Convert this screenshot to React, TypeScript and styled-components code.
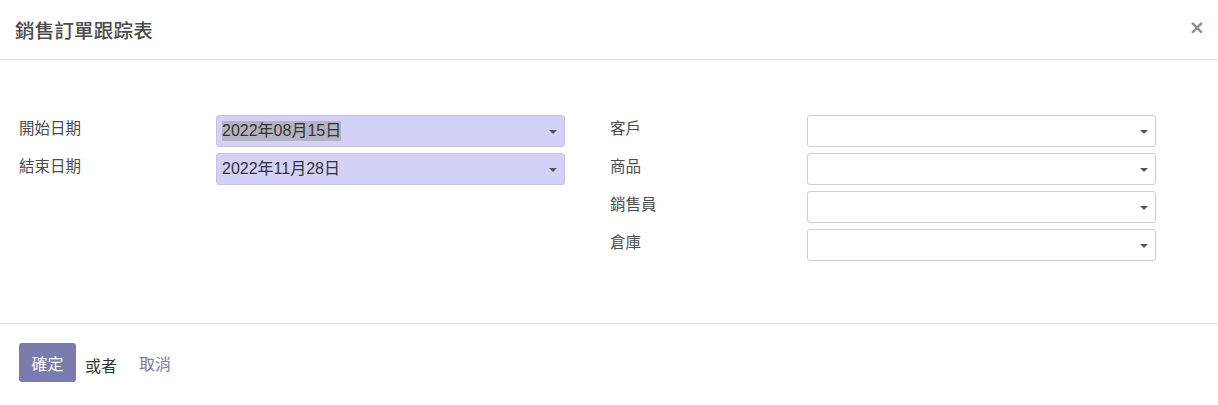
import React from 'react'
import styled, { createGlobalStyle } from 'styled-components'

const Global = createGlobalStyle`
  html, body {
    margin: 0;
    padding: 0;
    background: #fff;
  }
  body {
    font-family: "Liberation Sans", "Noto Sans CJK TC", sans-serif;
    color: #4c4c4c;
  }
`

type Field = { label: string; value?: string; selected?: boolean; date?: boolean }

const leftFields: Field[] = [
  { label: '開始日期', value: '2022年08月15日', selected: true, date: true },
  { label: '結束日期', value: '2022年11月28日', date: true },
]

const rightFields: Field[] = [
  { label: '客戶' },
  { label: '商品' },
  { label: '銷售員' },
  { label: '倉庫' },
]

const App = () => {
  return (
    <Dialog>
      <Global />
      <Header>
        <Title>銷售訂單跟踪表</Title>
        <Close>×</Close>
      </Header>
      <Body>
        <Group>
          {leftFields.map((f) => (
            <Row key={f.label}>
              <Label>{f.label}</Label>
              <Select $date={f.date}>
                <Value>{f.selected ? <Selected>{f.value}</Selected> : f.value}</Value>
                <Caret />
              </Select>
            </Row>
          ))}
        </Group>
        <Group>
          {rightFields.map((f) => (
            <Row key={f.label}>
              <Label>{f.label}</Label>
              <Select>
                <Value />
                <Caret />
              </Select>
            </Row>
          ))}
        </Group>
      </Body>
      <Footer>
        <Primary>確定</Primary>
        <Or>或者</Or>
        <Cancel>取消</Cancel>
      </Footer>
    </Dialog>
  )
}

export default App

const Dialog = styled.div`
  width: 1218px;
  height: 405px;
  background: #fff;
  display: flex;
  flex-direction: column;
`
const Header = styled.div`
  height: 59px;
  border-bottom: 1px solid #e2e2e2;
  display: flex;
  align-items: center;
  justify-content: space-between;
  padding: 0 13px 0 15px;
`
const Title = styled.div`
  font-family: "Noto Sans CJK TC", sans-serif;
  font-size: 19.5px;
  font-weight: 500;
  color: #4a4a4a;
  letter-spacing: 0.2px;
`
const Close = styled.div`
  font-family: "DejaVu Sans", sans-serif;
  font-size: 19px;
  font-weight: bold;
  color: #8a8a8a;
  line-height: 1;
  margin-top: -5px;
`
const Body = styled.div`
  display: grid;
  grid-template-columns: 591px 592px;
  padding: 55px 19px 62px 16px;
  border-bottom: 1px solid #e2e2e2;
`
const Group = styled.div`
  display: flex;
  flex-direction: column;
  gap: 6px;
`
const Row = styled.div`
  display: grid;
  grid-template-columns: 200px 349px;
  align-items: start;
`
const Label = styled.div`
  font-family: "Noto Sans CJK TC", sans-serif;
  font-size: 15.5px;
  line-height: 21px;
  padding: 2px 0 0 3px;
  color: #4c4c4c;
`
const Select = styled.div<{ $date?: boolean }>`
  box-sizing: border-box;
  height: 32px;
  border: 1px solid ${(p) => (p.$date ? '#c6c4e6' : '#cfcfcf')};
  border-radius: 3px;
  background: ${(p) => (p.$date ? '#d3d1f8' : '#fff')};
  display: flex;
  align-items: center;
  padding: 0 7px 0 5px;
`
const Value = styled.div`
  flex: 1;
  font-size: 16px;
  color: #333;
  line-height: 24px;
`
const Selected = styled.span`
  background: #b4b3c2;
  padding: 1px 0 2px;
`
const Caret = styled.span`
  width: 0;
  height: 0;
  border-left: 4px solid transparent;
  border-right: 4px solid transparent;
  border-top: 4px solid #555;
  margin-top: 1px;
`
const Footer = styled.div`
  display: flex;
  align-items: center;
  padding: 19px 19px 0;
`
const Primary = styled.button`
  height: 39px;
  width: 57px;
  padding: 0;
  border: none;
  border-radius: 3px;
  background: #7c7bad;
  color: #fff;
  font-family: "Noto Sans CJK TC", sans-serif;
  font-size: 16px;
`
const Or = styled.span`
  font-family: "Noto Sans CJK TC", sans-serif;
  font-size: 16px;
  color: #333;
  margin-left: 9px;
  margin-top: 4px;
`
const Cancel = styled.span`
  font-family: "Noto Sans CJK TC", sans-serif;
  font-size: 16px;
  color: #7c7bad;
  margin-left: 22px;
  margin-top: 1px;
`
